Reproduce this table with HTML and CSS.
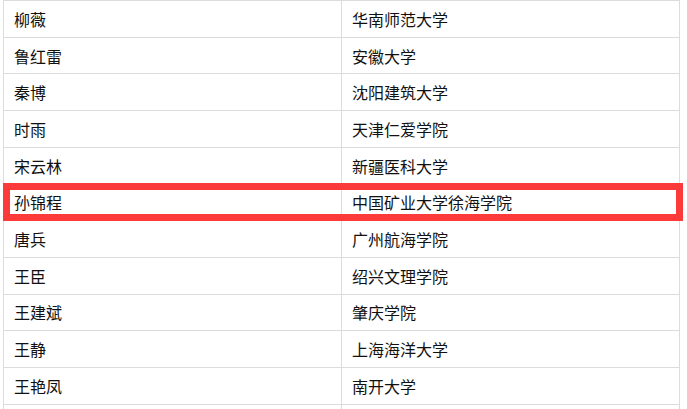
FILE: index.html
```html
<!DOCTYPE html>
<html lang="zh-CN">
<head>
    <meta charset="UTF-8">
    <meta name="viewport" content="width=device-width, initial-scale=1.0">
    <title>名单</title>
    <link rel="stylesheet" href="styles.css">
</head>
<body>
    <div class="sheet">
        <table class="list">
            <tbody>
                <tr><td>柳薇</td><td>华南师范大学</td></tr>
                <tr><td>鲁红雷</td><td>安徽大学</td></tr>
                <tr><td>秦博</td><td>沈阳建筑大学</td></tr>
                <tr><td>时雨</td><td>天津仁爱学院</td></tr>
                <tr><td>宋云林</td><td>新疆医科大学</td></tr>
                <tr><td>孙锦程</td><td>中国矿业大学徐海学院</td></tr>
                <tr><td>唐兵</td><td>广州航海学院</td></tr>
                <tr><td>王臣</td><td>绍兴文理学院</td></tr>
                <tr><td>王建斌</td><td>肇庆学院</td></tr>
                <tr><td>王静</td><td>上海海洋大学</td></tr>
                <tr><td>王艳凤</td><td>南开大学</td></tr>
                <tr class="cut"><td></td><td></td></tr>
            </tbody>
        </table>
        <div class="mark"></div>
    </div>
</body>
</html>
```

FILE: styles.css
```css
body {
    margin: 0;
    padding: 0;
    background: #fff;
    font-family: "Noto Sans CJK SC", "Noto Sans", sans-serif;
    color: #111;
    overflow: hidden;
}
.sheet {
    position: relative;
    padding: 0 0 0 3px;
}
.list {
    border-collapse: collapse;
    width: 677px;
    table-layout: fixed;
}
.list td {
    border: 1px solid #dcdcdc;
    height: 36.7px;
    padding: 0 10px;
    font-size: 16px;
    line-height: 20px;
    vertical-align: middle;
    box-sizing: border-box;
}
.list td:first-child {
    width: 338px;
}
/* the row that runs off the bottom of the view */
.list .cut td {
    height: 5px;
    border-bottom: none;
}
/* red annotation box drawn over the highlighted row */
.mark {
    position: absolute;
    left: 3px;
    top: 183px;
    width: 680px;
    height: 38px;
    border: 7px solid #fd3a3a;
    box-sizing: border-box;
}
```
